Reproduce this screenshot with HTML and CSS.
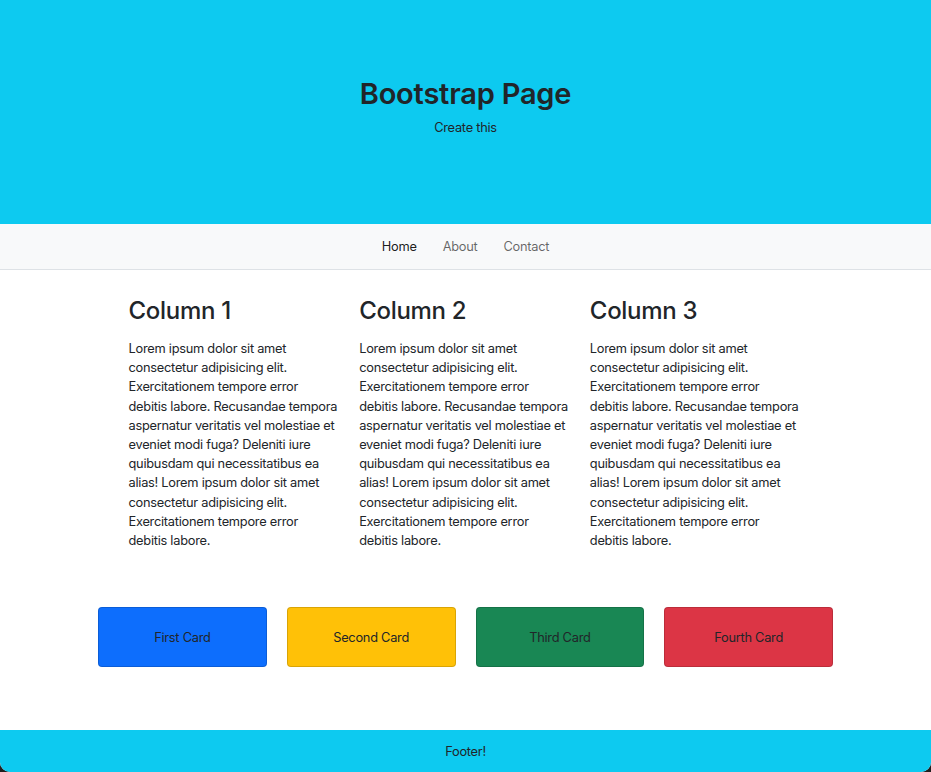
FILE: index.html
```html
<!DOCTYPE html>
<html lang="en">
<head>
<meta charset="utf-8">
<title>Bootstrap Page</title>
<link rel="stylesheet" href="styles.css">
</head>
<body>
<div class="page">
  <header class="hero">
    <h1 class="hero-title">Bootstrap Page</h1>
    <p class="hero-sub">Create this</p>
  </header>
  <nav class="navbar">
    <a class="nav-link active" href="#">Home</a>
    <a class="nav-link" href="#">About</a>
    <a class="nav-link" href="#">Contact</a>
  </nav>
  <main class="content">
    <section class="columns">
      <div class="col">
        <h2 class="col-title">Column 1</h2>
        <p class="col-text">Lorem ipsum dolor sit amet consectetur adipisicing elit. Exercitationem tempore error debitis labore. Recusandae tempora aspernatur veritatis vel molestiae et eveniet modi fuga? Deleniti iure quibusdam qui necessitatibus ea alias! Lorem ipsum dolor sit amet consectetur adipisicing elit. Exercitationem tempore error debitis labore.</p>
      </div>
      <div class="col">
        <h2 class="col-title">Column 2</h2>
        <p class="col-text">Lorem ipsum dolor sit amet consectetur adipisicing elit. Exercitationem tempore error debitis labore. Recusandae tempora aspernatur veritatis vel molestiae et eveniet modi fuga? Deleniti iure quibusdam qui necessitatibus ea alias! Lorem ipsum dolor sit amet consectetur adipisicing elit. Exercitationem tempore error debitis labore.</p>
      </div>
      <div class="col">
        <h2 class="col-title">Column 3</h2>
        <p class="col-text">Lorem ipsum dolor sit amet consectetur adipisicing elit. Exercitationem tempore error debitis labore. Recusandae tempora aspernatur veritatis vel molestiae et eveniet modi fuga? Deleniti iure quibusdam qui necessitatibus ea alias! Lorem ipsum dolor sit amet consectetur adipisicing elit. Exercitationem tempore error debitis labore.</p>
      </div>
    </section>
    <section class="cards">
      <div class="card card-primary">First Card</div>
      <div class="card card-warning">Second Card</div>
      <div class="card card-success">Third Card</div>
      <div class="card card-danger">Fourth Card</div>
    </section>
  </main>
  <footer class="footer">Footer!</footer>
</div>
</body>
</html>
```
FILE: styles.css
```css
html {
  background: #1f1f1f;
}
body {
  margin: 0;
  font-family: Inter, "Noto Sans", "Liberation Sans", sans-serif;
  font-size: 12.8px;
  line-height: 19.2px;
  letter-spacing: -0.25px;
  color: #212529;
}
.page {
  background: #fff;
  min-height: 772px;
  display: flex;
  flex-direction: column;
  border-radius: 0 0 10px 10px;
  overflow: hidden;
}
.hero {
  background: #0dcaf0;
  height: 224px;
  box-sizing: border-box;
  padding-top: 76px;
  text-align: center;
}
.hero-title {
  margin: 0 0 7px;
  font-size: 29px;
  line-height: 35px;
  font-weight: 600;
  letter-spacing: -0.2px;
}
.hero-sub {
  margin: 0;
}
.navbar {
  background: #f8f9fa;
  border-bottom: 1px solid #dee2e6;
  height: 45px;
  display: flex;
  justify-content: center;
  align-items: center;
}
.nav-link {
  text-decoration: none;
  color: rgba(0, 0, 0, 0.6);
  padding: 0 13px;
}
.nav-link.active {
  color: rgba(0, 0, 0, 0.9);
}
.content {
  flex: 1;
}
.columns {
  width: 672px;
  margin: 0 0 0 calc(50% - 337px);
  padding-top: 26px;
  display: grid;
  grid-template-columns: repeat(3, 1fr);
  gap: 20px;
}
.col-title {
  margin: 0 0 14px;
  font-size: 24px;
  line-height: 29px;
  font-weight: 500;
  letter-spacing: -0.3px;
}
.col-text {
  margin: 0;
}
.cards {
  width: 735px;
  margin: 57px auto 63px;
  display: grid;
  grid-template-columns: repeat(4, 1fr);
  gap: 20px;
}
.card {
  height: 60px;
  box-sizing: border-box;
  border: 1px solid rgba(0, 0, 0, 0.15);
  border-radius: 4px;
  display: flex;
  align-items: center;
  justify-content: center;
}
.card-primary { background: #0d6efd; }
.card-warning { background: #ffc107; }
.card-success { background: #198754; }
.card-danger { background: #dc3545; }
.footer {
  background: #0dcaf0;
  height: 42px;
  display: flex;
  align-items: center;
  justify-content: center;
}
```
